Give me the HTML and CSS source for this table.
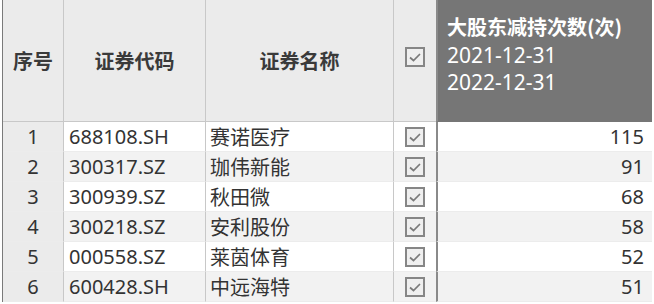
FILE: index.html
```html
<!DOCTYPE html>
<html lang="zh-CN">
<head>
<meta charset="utf-8">
<link rel="stylesheet" href="styles.css">
</head>
<body>
<div class="frame">
  <div class="grid">
    <div class="hd c1"><span class="hz">序号</span></div>
    <div class="hd c2"><span class="hz">证券代码</span></div>
    <div class="hd c3"><span class="hz">证券名称</span></div>
    <div class="hd c4"><svg class="cb" viewBox="0 0 20 20"><rect x="1" y="1" width="18" height="18"/><path d="M5 10.5 L8.5 13.5 L15 7"/></svg></div>
    <div class="hd c5 dark">
      <div class="title">大股东减持次数(次)</div>
      <div class="date">2021-12-31</div>
      <div class="date">2022-12-31</div>
    </div>

    <div class="td c1 idx">1</div><div class="td c2 code">688108.SH</div><div class="td c3 name">赛诺医疗</div><div class="td c4"><svg class="cb" viewBox="0 0 20 20"><rect x="1" y="1" width="18" height="18"/><path d="M5 10.5 L8.5 13.5 L15 7"/></svg></div><div class="td c5 num">115</div>
    <div class="td c1 idx alt">2</div><div class="td c2 code alt">300317.SZ</div><div class="td c3 name alt">珈伟新能</div><div class="td c4 alt"><svg class="cb" viewBox="0 0 20 20"><rect x="1" y="1" width="18" height="18"/><path d="M5 10.5 L8.5 13.5 L15 7"/></svg></div><div class="td c5 num alt">91</div>
    <div class="td c1 idx">3</div><div class="td c2 code">300939.SZ</div><div class="td c3 name">秋田微</div><div class="td c4"><svg class="cb" viewBox="0 0 20 20"><rect x="1" y="1" width="18" height="18"/><path d="M5 10.5 L8.5 13.5 L15 7"/></svg></div><div class="td c5 num">68</div>
    <div class="td c1 idx alt">4</div><div class="td c2 code alt">300218.SZ</div><div class="td c3 name alt">安利股份</div><div class="td c4 alt"><svg class="cb" viewBox="0 0 20 20"><rect x="1" y="1" width="18" height="18"/><path d="M5 10.5 L8.5 13.5 L15 7"/></svg></div><div class="td c5 num alt">58</div>
    <div class="td c1 idx">5</div><div class="td c2 code">000558.SZ</div><div class="td c3 name">莱茵体育</div><div class="td c4"><svg class="cb" viewBox="0 0 20 20"><rect x="1" y="1" width="18" height="18"/><path d="M5 10.5 L8.5 13.5 L15 7"/></svg></div><div class="td c5 num">52</div>
    <div class="td c1 idx alt">6</div><div class="td c2 code alt">600428.SH</div><div class="td c3 name alt">中远海特</div><div class="td c4 alt"><svg class="cb" viewBox="0 0 20 20"><rect x="1" y="1" width="18" height="18"/><path d="M5 10.5 L8.5 13.5 L15 7"/></svg></div><div class="td c5 num alt">51</div>
  </div>
</div>
</body>
</html>
```

FILE: styles.css
```css
html, body {
  margin: 0;
  padding: 0;
  background: #ffffff;
}

body {
  font-family: "Noto Sans", "Noto Sans CJK SC", sans-serif;
  color: #333333;
}

.frame {
  margin-left: 2px;
  border-left: 1px solid #7a7a7a;
  width: 649px;
}

.grid {
  display: grid;
  grid-template-columns: 61px 142px 188px 42px 216px;
  grid-template-rows: 122px repeat(6, 30px);
}

.hd, .td {
  box-sizing: border-box;
  display: flex;
  align-items: center;
}

.hd {
  background: #ebebeb;
  border-bottom: 1px solid #c8c8c8;
  justify-content: center;
}

.hd.c1, .hd.c2, .hd.c3,
.td.c1, .td.c2, .td.c3 {
  border-right: 1px solid #c8c8c8;
}

.hz {
  font-family: "Noto Sans CJK SC", sans-serif;
  font-size: 20px;
  font-weight: 700;
  color: #3a3a3a;
}

.hd.c4 {
  padding-bottom: 7px;
}

.c5 {
  border-left: 2px solid #8a8a8a;
}

.hd.dark {
  background: #767676;
  border-bottom-color: #767676;
  flex-direction: column;
  align-items: flex-start;
  justify-content: flex-start;
  padding: 11px 0 0 9px;
  color: #ffffff;
}

.title {
  font-family: "Noto Sans CJK SC", sans-serif;
  font-weight: 700;
  font-size: 20px;
  line-height: 31px;
}

.date {
  font-size: 21px;
  line-height: 27px;
}

.td {
  background: #ffffff;
  border-bottom: 1px solid #ececec;
}

.td.alt {
  background: #f2f2f2;
}

.td.c1, .td.c1.alt {
  background: #ebebeb;
  justify-content: center;
}

.idx, .code, .num {
  font-size: 20px;
}

.code {
  padding-left: 5px;
}

.name {
  font-family: "Noto Sans CJK SC", sans-serif;
  font-size: 20px;
  padding-left: 4px;
}

.td.c4 {
  justify-content: center;
}

.num {
  justify-content: flex-end;
  padding-right: 8px;
}

.cb {
  width: 20px;
  height: 20px;
  display: block;
}

.cb rect {
  fill: #efefef;
  stroke: #868686;
  stroke-width: 2;
}

.cb path {
  fill: none;
  stroke: #7a7a7a;
  stroke-width: 1.7;
}
```
